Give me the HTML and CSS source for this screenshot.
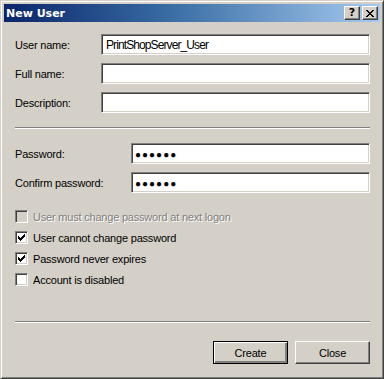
FILE: index.html
```
<!DOCTYPE html>
<html>
<head>
<meta charset="utf-8">
<link rel="stylesheet" href="styles.css">
</head>
<body>
<div class="window">
  <div class="titlebar">
    <span class="title">New User</span>
    <div class="tbtns">
      <span class="tbtn help">?</span>
      <span class="tbtn close"><svg width="8" height="7" viewBox="0 0 8 7" shape-rendering="crispEdges"><path d="M0 0h2v1h-2zM6 0h2v1h-2zM1 1h2v1h-2zM5 1h2v1h-2zM2 2h4v1h-4zM3 3h2v1h-2zM2 4h4v1h-4zM1 5h2v1h-2zM5 5h2v1h-2zM0 6h2v1h-2zM6 6h2v1h-2z" fill="#000"/></svg></span>
    </div>
  </div>
  <div class="content">
    <div class="fields fields1">
      <label>User name:</label><div class="input">PrintShopServer_User</div>
      <label>Full name:</label><div class="input"></div>
      <label>Description:</label><div class="input"></div>
    </div>
    <div class="sep sep1"></div>
    <div class="fields fields2">
      <label>Password:</label><div class="input pw">●●●●●●</div>
      <label>Confirm password:</label><div class="input pw">●●●●●●</div>
    </div>
    <div class="checks">
      <div class="check disabled"><span class="box"></span><span class="ctext">User must change password at next logon</span></div>
      <div class="check"><span class="box"><svg width="7" height="7" viewBox="0 0 7 7" shape-rendering="crispEdges"><path d="M6 0h1v3h-1zM5 1h1v3h-1zM4 2h1v3h-1zM3 3h1v3h-1zM2 4h1v3h-1zM1 3h1v3h-1zM0 2h1v3h-1z" fill="#000"/></svg></span><span class="ctext">User cannot change password</span></div>
      <div class="check"><span class="box"><svg width="7" height="7" viewBox="0 0 7 7" shape-rendering="crispEdges"><path d="M6 0h1v3h-1zM5 1h1v3h-1zM4 2h1v3h-1zM3 3h1v3h-1zM2 4h1v3h-1zM1 3h1v3h-1zM0 2h1v3h-1z" fill="#000"/></svg></span><span class="ctext">Password never expires</span></div>
      <div class="check"><span class="box"></span><span class="ctext">Account is disabled</span></div>
    </div>
    <div class="sep sep2"></div>
    <div class="buttons">
      <button class="btn default">Create</button>
      <button class="btn">Close</button>
    </div>
  </div>
</div>
</body>
</html>
```
FILE: styles.css
```
* { box-sizing: border-box; }
html, body { margin: 0; padding: 0; background: #d4d0c8; }
body { font-family: "Liberation Sans", Arial, sans-serif; font-size: 11px; color: #000; letter-spacing: -0.2px; }

.window {
  width: 384px;
  height: 379px;
  background: #d4d0c8;
  border: 1px solid;
  border-color: #d4d0c8 #404040 #404040 #d4d0c8;
  box-shadow: inset 1px 1px 0 #fff, inset -1px -1px 0 #808080;
  padding: 3px;
  display: flex;
  flex-direction: column;
}

.titlebar {
  height: 18px;
  background: linear-gradient(to right, #0a246a 0%, #3a6ea5 45%, #a6caf0 100%);
  display: flex;
  align-items: center;
  justify-content: space-between;
  padding: 0 2px 0 2px;
}
.title {
  color: #fff;
  font-weight: bold;
  font-family: "DejaVu Sans", sans-serif;
  font-size: 11px;
  letter-spacing: 0;
}
.tbtns { display: flex; gap: 2px; }
.tbtn {
  width: 16px;
  height: 14px;
  background: #d4d0c8;
  border: 1px solid;
  border-color: #fff #404040 #404040 #fff;
  box-shadow: inset -1px -1px 0 #808080;
  display: flex;
  align-items: center;
  justify-content: center;
  font-weight: bold;
  font-family: "DejaVu Sans", sans-serif;
  font-size: 11px;
  line-height: 1;
  letter-spacing: 0;
}
.help { padding-bottom: 1px; }

.content {
  flex: 1;
  padding: 12px 10px 0 11px;
  display: flex;
  flex-direction: column;
}

.fields {
  display: grid;
  row-gap: 8px;
  align-items: center;
}
.fields1 { grid-template-columns: 86px 269px; }
.fields2 { grid-template-columns: 116px 239px; margin-top: 14px; }

.input {
  height: 21px;
  background: #fff;
  border: 1px solid;
  border-color: #808080 #fff #fff #808080;
  box-shadow: inset 1px 1px 0 #404040, inset -1px -1px 0 #d4d0c8;
  padding: 3px 0 0 4px;
  white-space: nowrap;
  font-size: 12px;
  line-height: 14px;
  letter-spacing: -0.9px;
}
.input.pw { font-size: 10px; letter-spacing: 1px; padding-top: 4px; padding-left: 3px; }

.fields label { font-size: 11px; }

.sep {
  width: 355px;
  height: 2px;
  border-top: 1px solid #808080;
  border-bottom: 1px solid #fff;
}
.sep1 { margin-top: 14px; }
.sep2 { margin-top: 35px; }

.checks {
  margin-top: 17px;
  display: flex;
  flex-direction: column;
  gap: 8px;
}
.check {
  display: flex;
  align-items: center;
  height: 13px;
}
.box {
  width: 13px;
  height: 13px;
  background: #fff;
  border: 1px solid;
  border-color: #808080 #fff #fff #808080;
  box-shadow: inset 1px 1px 0 #404040, inset -1px -1px 0 #d4d0c8;
  display: flex;
  align-items: center;
  justify-content: center;
  margin-right: 5px;
  flex: none;
}
.check.disabled .box { background: #d4d0c8; }
.check.disabled .ctext { color: #808080; text-shadow: 1px 1px 0 #fff; }

.buttons {
  margin-top: 18px;
  display: flex;
  justify-content: flex-end;
  gap: 7px;
  width: 355px;
}
.btn {
  width: 75px;
  height: 23px;
  background: #d4d0c8;
  font-family: "Liberation Sans", Arial, sans-serif;
  font-size: 11px;
  letter-spacing: -0.2px;
  color: #000;
  border: 1px solid;
  border-color: #fff #404040 #404040 #fff;
  box-shadow: inset -1px -1px 0 #808080;
  padding: 0;
  margin: 0;
}
.btn.default {
  border: 1px solid #000;
  box-shadow: inset 1px 1px 0 #fff, inset -2px -2px 0 #808080, inset -1px -1px 0 #404040;
}
```
